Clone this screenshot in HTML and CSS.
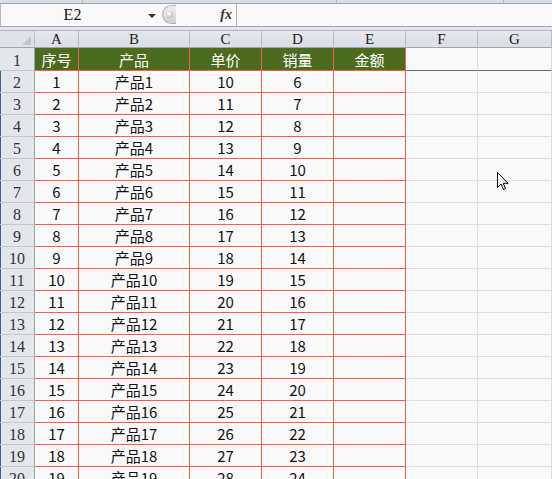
FILE: index.html
```html
<!DOCTYPE html>
<html>
<head>
<meta charset="utf-8">
<link rel="stylesheet" href="styles.css">
</head>
<body>
<div class="app">
  <div class="topstrip"><span class="seg s1"></span><span class="seg s2"></span><span class="seg s3"></span></div>
  <div class="fbar">
    <div class="namebox"><span class="nb-text">E2</span><span class="caret"></span></div>
    <div class="knob"></div>
    <div class="fx">fx</div>
    <div class="finput"></div>
  </div>
  <div class="gap"></div>
  <div class="sheet">
    <div class="corner"><span class="tri"></span></div>
    <div class="ch">A</div><div class="ch">B</div><div class="ch">C</div><div class="ch">D</div><div class="ch">E</div><div class="ch">F</div><div class="ch">G</div>

    <div class="rh r1">1</div><div class="hd">序号</div><div class="hd">产品</div><div class="hd">单价</div><div class="hd">销量</div><div class="hd">金额</div><div class="gc r1b"></div><div class="gc r1b"></div>

    <div class="rh">2</div><div class="t">1</div><div class="t">产品1</div><div class="t">10</div><div class="t">6</div><div class="t"></div><div class="gc"></div><div class="gc"></div>
    <div class="rh">3</div><div class="t">2</div><div class="t">产品2</div><div class="t">11</div><div class="t">7</div><div class="t"></div><div class="gc"></div><div class="gc"></div>
    <div class="rh">4</div><div class="t">3</div><div class="t">产品3</div><div class="t">12</div><div class="t">8</div><div class="t"></div><div class="gc"></div><div class="gc"></div>
    <div class="rh">5</div><div class="t">4</div><div class="t">产品4</div><div class="t">13</div><div class="t">9</div><div class="t"></div><div class="gc"></div><div class="gc"></div>
    <div class="rh">6</div><div class="t">5</div><div class="t">产品5</div><div class="t">14</div><div class="t">10</div><div class="t"></div><div class="gc"></div><div class="gc"></div>
    <div class="rh">7</div><div class="t">6</div><div class="t">产品6</div><div class="t">15</div><div class="t">11</div><div class="t"></div><div class="gc"></div><div class="gc"></div>
    <div class="rh">8</div><div class="t">7</div><div class="t">产品7</div><div class="t">16</div><div class="t">12</div><div class="t"></div><div class="gc"></div><div class="gc"></div>
    <div class="rh">9</div><div class="t">8</div><div class="t">产品8</div><div class="t">17</div><div class="t">13</div><div class="t"></div><div class="gc"></div><div class="gc"></div>
    <div class="rh">10</div><div class="t">9</div><div class="t">产品9</div><div class="t">18</div><div class="t">14</div><div class="t"></div><div class="gc"></div><div class="gc"></div>
    <div class="rh">11</div><div class="t">10</div><div class="t">产品10</div><div class="t">19</div><div class="t">15</div><div class="t"></div><div class="gc"></div><div class="gc"></div>
    <div class="rh">12</div><div class="t">11</div><div class="t">产品11</div><div class="t">20</div><div class="t">16</div><div class="t"></div><div class="gc"></div><div class="gc"></div>
    <div class="rh">13</div><div class="t">12</div><div class="t">产品12</div><div class="t">21</div><div class="t">17</div><div class="t"></div><div class="gc"></div><div class="gc"></div>
    <div class="rh">14</div><div class="t">13</div><div class="t">产品13</div><div class="t">22</div><div class="t">18</div><div class="t"></div><div class="gc"></div><div class="gc"></div>
    <div class="rh">15</div><div class="t">14</div><div class="t">产品14</div><div class="t">23</div><div class="t">19</div><div class="t"></div><div class="gc"></div><div class="gc"></div>
    <div class="rh">16</div><div class="t">15</div><div class="t">产品15</div><div class="t">24</div><div class="t">20</div><div class="t"></div><div class="gc"></div><div class="gc"></div>
    <div class="rh">17</div><div class="t">16</div><div class="t">产品16</div><div class="t">25</div><div class="t">21</div><div class="t"></div><div class="gc"></div><div class="gc"></div>
    <div class="rh">18</div><div class="t">17</div><div class="t">产品17</div><div class="t">26</div><div class="t">22</div><div class="t"></div><div class="gc"></div><div class="gc"></div>
    <div class="rh">19</div><div class="t">18</div><div class="t">产品18</div><div class="t">27</div><div class="t">23</div><div class="t"></div><div class="gc"></div><div class="gc"></div>
    <div class="rh">20</div><div class="t">19</div><div class="t">产品19</div><div class="t">28</div><div class="t">24</div><div class="t"></div><div class="gc"></div><div class="gc"></div>
  </div>
  <svg class="cursor" width="13" height="20" viewBox="0 0 13 20">
    <path d="M0.5 0.5 L0.5 15.5 L4 12 L6.5 17.5 L8.5 16.5 L6.2 11.3 L11 11.3 Z" fill="#fff" stroke="#000" stroke-width="1" stroke-linejoin="miter"/>
  </svg>
</div>
</body>
</html>
```

FILE: styles.css
```css
* { box-sizing: border-box; margin: 0; padding: 0; }
html, body { width: 552px; height: 479px; overflow: hidden; background: #f9f9f9; }
body { font-family: "Noto Sans CJK SC", "Noto Sans", sans-serif; color: #111; }

.app { position: relative; width: 552px; height: 479px; overflow: hidden; }

.topstrip { height: 4px; background: #d7dce5; border-bottom: 1px solid #9ea4ad; display: flex; }
.seg { height: 3px; border-right: 1px solid #b3bac5; }
.s1 { width: 83px; }
.s2 { width: 254px; }
.s3 { width: 167px; }

.fbar { height: 23px; display: flex; background: #f9f9f9; border-bottom: 1px solid #a4a7ab; }
.namebox { width: 162px; display: flex; align-items: center; border-left: 1px solid #b7bcc4; }
.nb-text { width: 143px; text-align: center; font-family: "Liberation Serif", serif; font-size: 16px; color: #111; line-height: 20px; }
.caret { width: 0; height: 0; margin-left: 4px; border-left: 4px solid transparent; border-right: 4px solid transparent; border-top: 4px solid #333; margin-top: 1px; }
.knob { position: relative; width: 14px; height: 19px; margin-top: 1px; border: 1px solid #b4b4b4; border-right: none; border-radius: 10px 0 0 10px; background: linear-gradient(#ececec, #d2d2d2); }
.knob::after { content: ""; position: absolute; left: 3px; top: 5px; width: 7px; height: 7px; border-radius: 50%; background: radial-gradient(circle at 40% 35%, #ffffff, #a9a9a9); }
.fx { width: 61px; text-align: right; padding-right: 4px; font-family: "Liberation Serif", serif; font-style: italic; font-weight: bold; font-size: 14px; line-height: 21px; color: #333; border-right: 1px solid #b1b4b9; }
.finput { flex: 1; background: #f9f9f9; }

.gap { height: 3px; background: #e3e5ee; }

.sheet {
  display: grid;
  grid-template-columns: 35px 44px 111px 72px 72px 72px 72px 74px;
  grid-template-rows: 18px 23px repeat(19, 22px);
}
.sheet > div { display: flex; align-items: center; justify-content: center; font-size: 15px; }

.corner { position: relative; background: #dfe3e9; border-top: 1px solid #b1b7c1; border-bottom: 1px solid #9fa6b0; border-right: 1px solid #b9bfc8; }
.tri { position: absolute; right: 3px; bottom: 2px; width: 0; height: 0; border-left: 9px solid transparent; border-bottom: 9px solid #c3c8cf; }
.sheet > .ch { background: linear-gradient(#e4e7ec, #dadee5); border-top: 1px solid #b1b7c1; border-bottom: 1px solid #9fa6b0; border-right: 1px solid #b6bcc5; font-family: "Liberation Serif", serif; font-size: 15px; color: #222; line-height: 16px; }

.sheet > .rh { background: #e3e6eb; border-right: 1px solid #9ea6b0; border-bottom: 1px solid #c4c9d1; font-family: "Liberation Serif", serif; font-size: 16px; color: #333; box-shadow: inset 1px 0 #3d5e9b; padding-top: 3px; }
.sheet > .rh.r1 { box-shadow: none; }

.hd { background: #4d6b1f; color: #fff; border-right: 1px solid #f0604f; border-bottom: 1px solid #f0604f; }
.t { background: #f9f9f9; border-right: 1px solid #f0604f; border-bottom: 1px solid #f0604f; color: #111; }
.gc { background: #f9f9f9; border-right: 1px solid #dcdee0; border-bottom: 1px solid #dcdee0; }
.gc.r1b { border-bottom: 1px solid #6a6a6a; }

.cursor { position: absolute; left: 497px; top: 172px; }
```
